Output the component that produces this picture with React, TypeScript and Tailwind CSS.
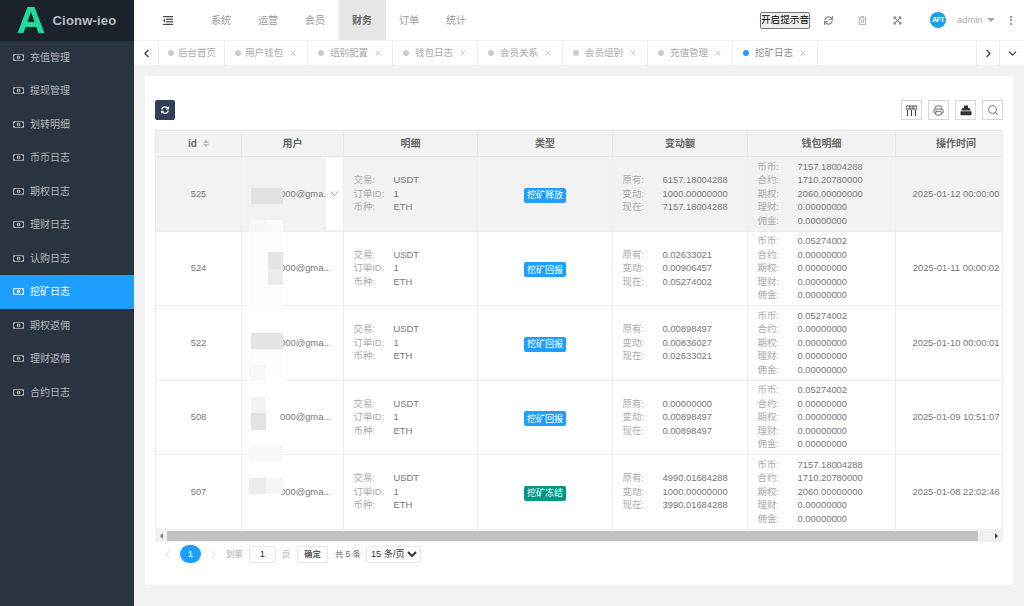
import { ChevronDown, ChevronLeft, ChevronRight, Printer, Search, X } from 'lucide-react';
import { FaExpandArrowsAlt, FaRegMoneyBillAlt, FaRegTrashAlt, FaSync, FaSyncAlt } from 'react-icons/fa';

const font = 'font-["Liberation_Sans","Noto_Sans_CJK_SC",sans-serif]';

const sideItems = ['充值管理', '提现管理', '划转明细', '币币日志', '期权日志', '理财日志', '认购日志', '挖矿日志', '期权返佣', '理财返佣', '合约日志'];
const topItems = ['系统', '运营', '会员', '财务', '订单', '统计'];
const tabs = ['用户钱包', '组别配置', '钱包日志', '会员关系', '会员组别', '充值管理', '挖矿日志'];

const rows = [
  { id: 525, type: '挖矿释放', tag: 'bg-[#1e9fff]', change: ['6157.18004288', '1000.00000000', '7157.18004288'], wallet: ['7157.18004288', '1710.20780000', '2060.00000000', '0.00000000', '0.00000000'], time: '2025-01-12 00:00:00' },
  { id: 524, type: '挖矿回报', tag: 'bg-[#1e9fff]', change: ['0.02633021', '0.00906457', '0.05274002'], wallet: ['0.05274002', '0.00000000', '0.00000000', '0.00000000', '0.00000000'], time: '2025-01-11 00:00:02' },
  { id: 522, type: '挖矿回报', tag: 'bg-[#1e9fff]', change: ['0.00898497', '0.00836027', '0.02633021'], wallet: ['0.05274002', '0.00000000', '0.00000000', '0.00000000', '0.00000000'], time: '2025-01-10 00:00:01' },
  { id: 508, type: '挖矿回报', tag: 'bg-[#1e9fff]', change: ['0.00000000', '0.00898497', '0.00898497'], wallet: ['0.05274002', '0.00000000', '0.00000000', '0.00000000', '0.00000000'], time: '2025-01-09 10:51:07' },
  { id: 507, type: '挖矿冻结', tag: 'bg-[#009688]', change: ['4990.01684288', '1000.00000000', '3990.01684288'], wallet: ['7157.18004288', '1710.20780000', '2060.00000000', '0.00000000', '0.00000000'], time: '2025-01-08 22:02:48' },
];

const Lines = ({ labels, values }: { labels: string[]; values: string[] }) => (
  <div className="flex flex-col pl-[9.5px] text-left">
    {labels.map((label, i) => (
      <div key={label} className="flex h-[13.5px] items-center whitespace-nowrap">
        <span className="w-[40px] text-[#aaa]">{label}</span>
        <span>{values[i]}</span>
      </div>
    ))}
  </div>
);

const ToolButton = ({ children }: { children: React.ReactNode }) => (
  <div className="flex h-[20px] w-[21px] items-center justify-center border border-[#d8d8d8] text-[#555]">{children}</div>
);

const patches = [
  'left-[96px] top-[58px] h-[16px] w-[32px] bg-[#e2e2e2]',
  'left-[94px] top-[90px] h-[12px] w-[17px] bg-[#f7f7f7]',
  'left-[111px] top-[90px] h-[12px] w-[17px] bg-[#fbfbfb]',
  'left-[94px] top-[102px] h-[85px] w-[34px] bg-[#fdfdfd]',
  'left-[113px] top-[122px] h-[17px] w-[15px] bg-[#e4e6e6]',
  'left-[113px] top-[139px] h-[16px] w-[15px] bg-[#ebebeb]',
  'left-[96px] top-[203px] h-[16px] w-[32px] bg-[#e3e4e4]',
  'left-[94px] top-[219px] h-[32px] w-[34px] bg-[#fdfdfd]',
  'left-[94px] top-[235px] h-[16px] w-[17px] bg-[#f8f8f8]',
  'left-[96px] top-[267px] h-[16px] w-[15px] bg-[#f4f4f4]',
  'left-[96px] top-[283px] h-[17px] w-[15px] bg-[#e3e3e3]',
  'left-[94px] top-[315px] h-[16px] w-[34px] bg-[#f9f9f9]',
  'left-[94px] top-[348px] h-[16px] w-[17px] bg-[#ececec]',
  'left-[111px] top-[348px] h-[16px] w-[17px] bg-[#f6f6f6]',
];

export default function App() {
  return (
    <div className={`flex h-[606px] w-[1024px] overflow-hidden bg-[#f2f2f2] ${font}`}>
      {/* sidebar */}
      <div className="flex w-[134px] shrink-0 flex-col bg-[#2a3440]">
        <div className="flex h-[40.5px] items-center bg-[#1b222c] pl-[16.5px]">
          <svg width="28" height="28" viewBox="0 0 28 28" className="shrink-0">
            <path d="M0.5 27 L10.5 1 H17.5 L27.5 27 H21.5 L19.4 21 H8.6 L6.5 27 Z M10.4 16 H17.6 L14 6 Z" fill="#1fdc9c" fillRule="evenodd" />
          </svg>
          <span className="ml-[8px] text-[13px] font-bold tracking-[0.2px] text-[#b9bcbf]">Cionw-ieo</span>
        </div>
        {sideItems.map((item) => {
          const active = item === '挖矿日志';
          return (
            <div key={item} className={`flex h-[33.5px] items-center pl-[13px] text-[10px] ${active ? 'bg-[#1e9fff] text-white' : 'text-[#b4b7ba]'}`}>
              <FaRegMoneyBillAlt className="mr-[6px] text-[11px]" />
              {item}
            </div>
          );
        })}
      </div>

      <div className="flex min-w-0 flex-1 flex-col">
        {/* top bar */}
        <div className="flex h-[41px] shrink-0 items-center border-b border-[#f0f0f0] bg-white text-[10px] text-[#999]">
          <div className="flex w-[63.5px] justify-center pl-[4px]">
            <svg width="10" height="9" viewBox="0 0 10 9" fill="#444">
              <rect x="0" y="0" width="10" height="1.2" />
              <rect x="3" y="2.6" width="7" height="1.2" />
              <rect x="3" y="5.2" width="7" height="1.2" />
              <rect x="0" y="7.8" width="10" height="1.2" />
              <path d="M2 2.5 V6.5 L0 4.5 Z" />
            </svg>
          </div>
          {topItems.map((item) => (
            <div key={item} className={`flex h-[40px] w-[47px] items-center justify-center ${item === '财务' ? 'bg-[#e6e6e6] font-bold text-[#666]' : ''}`}>
              {item}
            </div>
          ))}
          <button className="ml-[280.5px] h-[17px] w-[50px] whitespace-nowrap rounded-[2px] border border-[#767676] bg-[#efefef] text-[9.6px] leading-none text-black">开启提示音</button>
          <div className="ml-[13px] flex w-[10px] justify-center"><FaSync className="text-[9px] text-[#888]" /></div>
          <div className="ml-[24px] flex w-[10px] justify-center"><FaRegTrashAlt className="text-[9px] text-[#aaa]" /></div>
          <div className="ml-[25px] flex w-[10px] justify-center"><FaExpandArrowsAlt className="text-[9px] text-[#888]" /></div>
          <div className="ml-[28px] flex h-[16px] w-[16px] items-center justify-center rounded-full bg-[#1e9fdf] text-[7px] font-bold tracking-[-0.5px] text-white">AFT</div>
          <span className="ml-[11px] text-[9.4px] text-[#aaa]">admin</span>
          <div className="ml-[4px] h-0 w-0 border-x-[4px] border-t-[4px] border-x-transparent border-t-[#aaa]"></div>
          <div className="ml-[15px] flex flex-col gap-[1.5px]">
            <div className="h-[2px] w-[2px] bg-[#999]"></div>
            <div className="h-[2px] w-[2px] bg-[#999]"></div>
            <div className="h-[2px] w-[2px] bg-[#999]"></div>
          </div>
        </div>

        {/* tabs */}
        <div className="flex h-[24px] shrink-0 items-center bg-white text-[9.5px] text-[#aaa]">
          <div className="flex h-full w-[25px] items-center justify-center border-r border-[#f0f0f0]"><ChevronLeft size={13} strokeWidth={2} className="text-[#333]" /></div>
          <div className="flex h-full w-[66px] items-center border-r border-[#f0f0f0] pl-[9px]">
            <span className="mr-[4px] h-[6px] w-[6px] rounded-full bg-[#ccc]"></span>后台首页
          </div>
          {tabs.map((tab, i) => (
            <div key={tab} className={`flex h-full items-center border-r border-[#f0f0f0] pl-[10px] ${i === 0 ? 'w-[83px]' : 'w-[85px]'}`}>
              <span className={`h-[6px] w-[6px] shrink-0 rounded-full ${i === 0 ? 'mr-[4px]' : 'mr-[6px]'} ${i === 6 ? 'bg-[#1e9fff]' : 'bg-[#ccc]'}`}></span>
              <span className={i === 6 ? 'text-[#888]' : ''}>{tab}</span>
              <X size={8} className="ml-[6px] text-[#bbb]" />
            </div>
          ))}
          <div className="flex-1"></div>
          <div className="flex h-full w-[24px] items-center justify-center border-x border-[#f0f0f0]"><ChevronRight size={13} strokeWidth={2} className="text-[#333]" /></div>
          <div className="flex h-full w-[24px] items-center justify-center"><ChevronDown size={13} strokeWidth={2} className="text-[#333]" /></div>
        </div>

        {/* card */}
        <div className="mx-[11px] mt-[11px] flex h-[509px] flex-col rounded-[2px] bg-white px-[10px] pt-[24px]">
          <div className="flex h-[20px] items-center justify-between">
            <div className="flex h-[20px] w-[20px] items-center justify-center rounded-[2px] bg-[#2f4056]"><FaSyncAlt className="text-[8px] text-white" /></div>
            <div className="flex gap-[6px]">
              <ToolButton>
                <svg width="11" height="11" viewBox="0 0 11 11" fill="#444">
                  <rect x="0" y="1" width="11" height="3" fill="none" stroke="#444" />
                  <rect x="3.4" y="1" width="1" height="3" />
                  <rect x="6.6" y="1" width="1" height="3" />
                  <rect x="1" y="5" width="1" height="6" />
                  <rect x="5" y="5" width="1" height="6" />
                  <rect x="9" y="5" width="1" height="6" />
                </svg>
              </ToolButton>
              <ToolButton><Printer size={11} className="text-[#666]" /></ToolButton>
              <ToolButton>
                <svg width="12" height="11" viewBox="0 0 12 11" fill="#333">
                  <path d="M4 0.5 H8 V3 H9.5 L11 5.5 H1 L2.5 3 H4 Z" />
                  <rect x="0.5" y="6.3" width="11" height="4" rx="0.5" />
                </svg>
              </ToolButton>
              <ToolButton><Search size={12} className="text-[#777]" /></ToolButton>
            </div>
          </div>

          {/* table */}
          <div className="relative mt-[10px] h-[412px] w-[848px] overflow-hidden border-r border-[#eee] text-[9.4px] text-[#777]">
            <table className="w-[861px] table-fixed border-collapse">
              <colgroup>
                <col className="w-[86px]" />
                <col className="w-[102px]" />
                <col className="w-[134px]" />
                <col className="w-[135px]" />
                <col className="w-[135px]" />
                <col className="w-[148px]" />
                <col className="w-[121px]" />
              </colgroup>
              <thead>
                <tr className="h-[26px] bg-[#f2f2f2] text-[10px] font-bold text-[#666]">
                  <th className="border border-[#e6e6e6]">
                    <span className="inline-flex items-center justify-center gap-[6px]">
                      id
                      <span className="flex flex-col gap-[1px]">
                        <span className="h-0 w-0 border-x-[3.5px] border-b-[3.5px] border-x-transparent border-b-[#bbb]"></span>
                        <span className="h-0 w-0 border-x-[3.5px] border-t-[3.5px] border-x-transparent border-t-[#bbb]"></span>
                      </span>
                    </span>
                  </th>
                  <th className="border border-[#e6e6e6]">用户</th>
                  <th className="border border-[#e6e6e6]">明细</th>
                  <th className="border border-[#e6e6e6]">类型</th>
                  <th className="border border-[#e6e6e6]">变动额</th>
                  <th className="border border-[#e6e6e6]">钱包明细</th>
                  <th className="border border-[#e6e6e6]">操作时间</th>
                </tr>
              </thead>
              <tbody>
                {rows.map((row, i) => (
                  <tr key={row.id} className={`h-[74.5px] text-center ${i === 0 ? 'bg-[#f2f2f2]' : 'bg-white'}`}>
                    <td className="border border-[#eee]">{row.id}</td>
                    <td className="border border-[#eee] p-0">
                      <div className="flex h-[73px] items-center">
                        <span className={`shrink-0 whitespace-nowrap pl-[38px] text-left ${i === 0 ? 'w-[84px]' : 'w-full'}`}>{i === 0 ? '000@gma.' : '000@gma...'}</span>
                        {i === 0 && (
                          <div className="flex h-full w-[17px] items-center justify-center bg-white">
                            <ChevronDown size={15} strokeWidth={1} className="text-[#666]" />
                          </div>
                        )}
                      </div>
                    </td>
                    <td className="border border-[#eee]">
                      <Lines labels={['交易:', '订单ID:', '币种:']} values={['USDT', '1', 'ETH']} />
                    </td>
                    <td className="border border-[#eee]">
                      <span className={`mt-[3px] inline-block rounded-[2px] px-[2.5px] py-[1.5px] text-[9px] leading-[12px] text-white ${row.tag}`}>{row.type}</span>
                    </td>
                    <td className="border border-[#eee]">
                      <Lines labels={['原有:', '变动:', '现在:']} values={row.change} />
                    </td>
                    <td className="border border-[#eee]">
                      <Lines labels={['币币:', '合约:', '期权:', '理财:', '佣金:']} values={row.wallet} />
                    </td>
                    <td className="whitespace-nowrap border border-[#eee]">{row.time}</td>
                  </tr>
                ))}
              </tbody>
            </table>
            {patches.map((p) => (
              <div key={p} className={`absolute ${p}`}></div>
            ))}
            {/* scrollbar */}
            <div className="absolute bottom-0 left-0 flex h-[12px] w-full items-center bg-[#f1f1f1]">
              <div className="flex w-[12px] justify-center"><div className="h-0 w-0 border-y-[3px] border-r-[3px] border-y-transparent border-r-[#777]"></div></div>
              <div className="h-[10px] w-[811px] bg-[#c1c1c1]"></div>
              <div className="flex-1"></div>
              <div className="flex w-[12px] justify-center"><div className="h-0 w-0 border-y-[3px] border-l-[3px] border-y-transparent border-l-[#444]"></div></div>
            </div>
          </div>

          {/* pagination */}
          <div className="mt-[3px] flex h-[18px] items-center text-[8.3px] text-[#666]">
            <ChevronLeft size={13} strokeWidth={1} className="ml-[6px] text-[#bbb]" />
            <div className="ml-[6px] flex h-[18px] w-[21px] items-center justify-center rounded-full bg-[#1e9fff] text-[9.5px] text-white">1</div>
            <ChevronRight size={13} strokeWidth={1} className="ml-[6px] text-[#bbb]" />
            <span className="ml-[6px] w-[16px] whitespace-nowrap text-[#aaa]">到第</span>
            <div className="ml-[7px] flex h-[17px] w-[27px] items-center justify-center rounded-[2px] border border-[#e6e6e6] text-[9.5px] text-[#333]">1</div>
            <span className="ml-[6px] w-[8px] text-[#aaa]">页</span>
            <div className="ml-[7px] flex h-[17px] w-[31px] items-center justify-center rounded-[2px] border border-[#e6e6e6] font-bold text-[#555]">确定</div>
            <span className="ml-[7px] w-[25px] whitespace-nowrap">共 5 条</span>
            <select className="ml-[6px] h-[17px] w-[55px] rounded-[2px] border border-[#e6e6e6] bg-white text-[9.2px] text-[#333]" defaultValue="15">
              <option value="15">15 条/页</option>
            </select>
          </div>
        </div>
      </div>
    </div>
  );
}
